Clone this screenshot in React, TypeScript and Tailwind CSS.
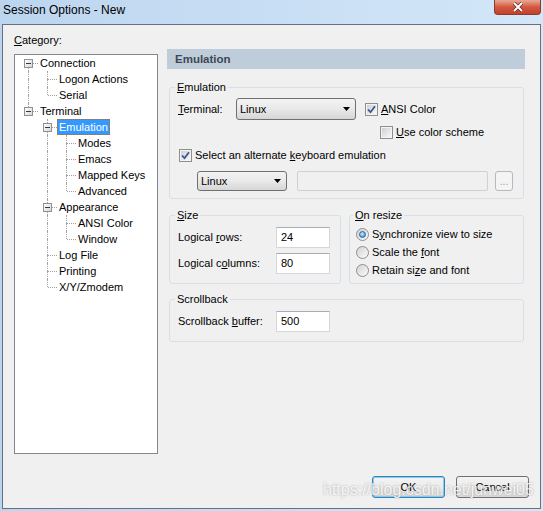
import type { ReactNode } from 'react'

type Guide = 'none' | 'pipe' | 'tee' | 'elbow' | 'boxFirst' | 'boxLast' | 'boxTee'

const tree: { label: string; guides: Guide[]; selected?: boolean }[] = [
  { label: 'Connection', guides: ['boxFirst'] },
  { label: 'Logon Actions', guides: ['pipe', 'tee'] },
  { label: 'Serial', guides: ['pipe', 'elbow'] },
  { label: 'Terminal', guides: ['boxLast'] },
  { label: 'Emulation', guides: ['none', 'boxTee'], selected: true },
  { label: 'Modes', guides: ['none', 'pipe', 'tee'] },
  { label: 'Emacs', guides: ['none', 'pipe', 'tee'] },
  { label: 'Mapped Keys', guides: ['none', 'pipe', 'tee'] },
  { label: 'Advanced', guides: ['none', 'pipe', 'elbow'] },
  { label: 'Appearance', guides: ['none', 'boxTee'] },
  { label: 'ANSI Color', guides: ['none', 'pipe', 'tee'] },
  { label: 'Window', guides: ['none', 'pipe', 'elbow'] },
  { label: 'Log File', guides: ['none', 'tee'] },
  { label: 'Printing', guides: ['none', 'tee'] },
  { label: 'X/Y/Zmodem', guides: ['none', 'elbow'] },
]

function GuideCell({ kind }: { kind: Guide }) {
  const top = kind === 'pipe' || kind === 'tee' || kind === 'elbow' || kind === 'boxLast' || kind === 'boxTee'
  const bottom = kind === 'pipe' || kind === 'tee' || kind === 'boxFirst' || kind === 'boxTee'
  const horiz = kind !== 'none' && kind !== 'pipe'
  const box = kind === 'boxFirst' || kind === 'boxLast' || kind === 'boxTee'
  return (
    <div className="relative h-[16px] w-[19px] shrink-0">
      {top && <span className="absolute left-[9px] top-0 h-[8px] w-0 border-l border-dotted border-[#a0a0a0]" />}
      {bottom && <span className="absolute left-[9px] top-[8px] h-[8px] w-0 border-l border-dotted border-[#a0a0a0]" />}
      {horiz && <span className="absolute left-[10px] top-[8px] h-0 w-[9px] border-t border-dotted border-[#a0a0a0]" />}
      {box && (
        <span className="absolute left-[5px] top-[4px] flex h-[9px] w-[9px] items-center justify-center border border-[#919191] bg-gradient-to-br from-white to-[#d6d6d6]">
          <span className="h-px w-[5px] bg-[#2b3b55]" />
        </span>
      )}
    </div>
  )
}

function Check({ checked }: { checked?: boolean }) {
  return (
    <span className="relative flex h-[13px] w-[13px] shrink-0 items-center justify-center border border-[#8e8f8f] bg-[#f4f4f4]">
      <span className="h-[9px] w-[9px] bg-gradient-to-br from-[#cdd0d5] to-[#f7f7f7]" />
      {checked && (
        <svg className="absolute left-[1px] top-[1px]" width="9" height="9" viewBox="0 0 9 9">
          <path d="M1 4.5 L3.5 7.2 L8 1.2" fill="none" stroke="#3a5694" strokeWidth="1.8" />
        </svg>
      )}
    </span>
  )
}

function Radio({ checked }: { checked?: boolean }) {
  return (
    <span className="flex h-[13px] w-[13px] shrink-0 items-center justify-center rounded-full border border-[#8e8f8f] bg-gradient-to-br from-[#d2d2d2] to-[#fbfbfb]">
      {checked && (
        <span className="h-[7px] w-[7px] rounded-full border border-[#2c5fa0] bg-[radial-gradient(circle_at_40%_35%,#c8ecfc,#2a7fd6)]" />
      )}
    </span>
  )
}

function Combo({ className }: { className: string }) {
  return (
    <div
      className={`flex items-center justify-between rounded-[3px] border border-[#707070] bg-gradient-to-b from-[#f3f3f3] via-[#e9e9e9] to-[#d6d6d6] pl-[3px] pr-[5px] ${className}`}
    >
      <span>Linux</span>
      <svg width="7" height="4" viewBox="0 0 7 4">
        <polygon points="0,0 7,0 3.5,4" fill="#000" />
      </svg>
    </div>
  )
}

function Field({ value }: { value: string }) {
  return (
    <div className="flex h-[21px] w-[54px] items-center border border-[#d5d7dc] border-t-[#abadb3] bg-white pl-[4px]">
      {value}
    </div>
  )
}

function Group({ label, className, children }: { label: ReactNode; className: string; children: ReactNode }) {
  return (
    <fieldset className={`rounded-[3px] border border-[#d5dfe5] ${className}`}>
      <legend className="-ml-[3px] px-[2px] leading-[13px]">{label}</legend>
      {children}
    </fieldset>
  )
}

function U({ children }: { children: ReactNode }) {
  return <span className="underline underline-offset-[1px]">{children}</span>
}

function Button({ children, primary }: { children: ReactNode; primary?: boolean }) {
  return (
    <button
      className={
        primary
          ? 'flex h-[22px] w-[73px] items-center justify-center rounded-[3px] border border-[#3c7fb1] bg-gradient-to-b from-[#f4f4f4] via-[#ebebeb] to-[#d8d8d8] shadow-[inset_0_0_0_1px_#7fd0f8]'
          : 'flex h-[22px] w-[73px] items-center justify-center rounded-[3px] border border-[#707070] bg-gradient-to-b from-[#f4f4f4] via-[#ebebeb] to-[#d8d8d8]'
      }
    >
      {children}
    </button>
  )
}

export default function App() {
  return (
    <div className="relative h-[511px] w-[543px] overflow-hidden bg-gradient-to-r from-[#bcd5ef] to-[#d4e7f9] font-['Liberation_Sans',Arial,sans-serif] text-[11px] leading-[13px] text-black">
      {/* title bar */}
      <div className="flex h-[24px] items-start justify-between">
        <div className="pl-[3px] pt-[2px] text-[12px] leading-[16px]">Session Options - New</div>
        <div className="mr-[2px] flex h-[15px] w-[47px] items-center justify-center rounded-b-[4px] border border-t-0 border-[#8a3b30] bg-gradient-to-b from-[#e9a896] via-[#d2583f] to-[#c3412c]">
          <svg width="12" height="10" viewBox="0 0 12 10">
            <path d="M2 1 L10 9 M10 1 L2 9" stroke="#5a2a24" strokeWidth="3.4" />
            <path d="M2 1 L10 9 M10 1 L2 9" stroke="#fff" strokeWidth="2" />
          </svg>
        </div>
      </div>

      {/* client area */}
      <div className="ml-[2px] flex h-[485px] w-[539px] flex-col border border-[#64717e] bg-[#f0f0f0]">
        <div className="flex">
          {/* category tree */}
          <div className="ml-[11px] flex flex-col">
            <div className="mt-[9px]">
              <U>C</U>ategory:
            </div>
            <div className="mt-[7px] h-[400px] w-[144px] border border-[#828790] bg-white pl-[4px]">
              {tree.map((item) => (
                <div key={item.label} className="flex h-[16px] items-center">
                  {item.guides.map((g, i) => (
                    <GuideCell key={i} kind={g} />
                  ))}
                  <span
                    className={
                      item.selected
                        ? 'h-[16px] bg-[#3399ff] px-[2px] leading-[16px] text-white outline outline-1 -outline-offset-1 outline-dotted outline-[#cc6600]'
                        : 'h-[16px] px-[2px] leading-[16px]'
                    }
                  >
                    {item.label}
                  </span>
                </div>
              ))}
            </div>
          </div>

          {/* options pane */}
          <div className="ml-[9px] mt-[24px] flex w-[358px] flex-col">
            <div className="flex h-[20px] items-center bg-[#bfcddb] pl-[8px] text-[11.5px] font-bold text-[#3d4854]">
              Emulation
            </div>

            <Group label={<><U>E</U>mulation</>} className="ml-[2px] mt-[12px] w-[355px] pb-[7px] pl-[8px]">
              <div className="mt-[4px] flex h-[22px] items-center">
                <span className="w-[58px]">
                  <U>T</U>erminal:
                </span>
                <Combo className="h-[22px] w-[120px]" />
                <span className="ml-[9px] flex items-center gap-[3px]">
                  <Check checked />
                  <span>
                    <U>A</U>NSI Color
                  </span>
                </span>
              </div>
              <div className="mt-[6px] flex h-[13px] items-center gap-[3px] pl-[202px]">
                <Check />
                <span>
                  <U>U</U>se color scheme
                </span>
              </div>
              <div className="mt-[10px] flex h-[13px] items-center gap-[3px] pl-[1px]">
                <Check checked />
                <span>
                  Select an alternate <U>k</U>eyboard emulation
                </span>
              </div>
              <div className="mt-[9px] flex h-[20px] items-center pl-[19px]">
                <Combo className="h-[20px] w-[90px]" />
                <div className="ml-[10px] h-[20px] w-[191px] rounded-[2px] border border-[#d0d0d0] bg-[#f0f0f0]" />
                <div className="ml-[7px] flex h-[20px] w-[18px] items-end justify-center rounded-[3px] border border-[#b5b9bd] bg-[#f4f4f4] pb-[4px] text-[10px] leading-[8px] text-[#a0a0a0]">
                  ...
                </div>
              </div>
            </Group>

            <div className="ml-[2px] mt-[10px] flex gap-[8px]">
              <Group label={<><U>S</U>ize</>} className="w-[172px] pb-[9px] pl-[8px]">
                <div className="mt-[5px] flex h-[21px] items-center">
                  <span className="w-[98px]">
                    Logical <U>r</U>ows:
                  </span>
                  <Field value="24" />
                </div>
                <div className="mt-[5px] flex h-[21px] items-center">
                  <span className="w-[98px]">
                    Logical c<U>o</U>lumns:
                  </span>
                  <Field value="80" />
                </div>
              </Group>
              <Group label={<><U>O</U>n resize</>} className="w-[175px] pl-[6px]">
                <div className="mt-[3px] flex h-[18px] items-center gap-[3px]">
                  <Radio checked />
                  <span>
                    S<U>y</U>nchronize view to size
                  </span>
                </div>
                <div className="flex h-[18px] items-center gap-[3px]">
                  <Radio />
                  <span>
                    Scale the <U>f</U>ont
                  </span>
                </div>
                <div className="flex h-[18px] items-center gap-[3px]">
                  <Radio />
                  <span>
                    Retain si<U>z</U>e and font
                  </span>
                </div>
              </Group>
            </div>

            <Group label="Scrollback" className="ml-[2px] mt-[9px] w-[355px] pb-[9px] pl-[8px]">
              <div className="mt-[5px] flex h-[21px] items-center">
                <span className="w-[98px]">
                  Scrollback <U>b</U>uffer:
                </span>
                <Field value="500" />
              </div>
            </Group>
          </div>
        </div>

        <div className="mb-[10px] mr-[11px] mt-auto flex justify-end gap-[11px]">
          <Button primary>OK</Button>
          <Button>Cancel</Button>
        </div>
      </div>

      <div className="pointer-events-none absolute left-[323px] top-[481px] text-[16px] leading-[18px] text-white/85 [text-shadow:0_0_2px_rgba(0,0,0,0.35)]">
        https://blog.csdn.net/junwei05
      </div>
    </div>
  )
}
